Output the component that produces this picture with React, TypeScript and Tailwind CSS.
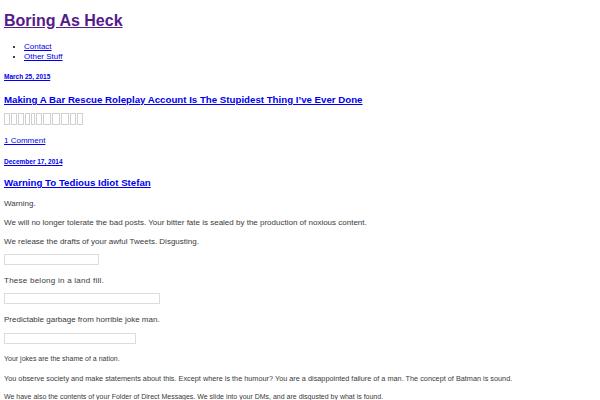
const posts = {
  bodyFont: "font-['Liberation_Sans',Arial,sans-serif]",
};

// widths of the missing-glyph boxes in the first post's excerpt
const boxes = [6, 6, 6, 5, 4, 6, 8, 8, 8, 6, 6];

function Field({ width }: { width: string }) {
  return <div className={`h-[11px] border border-[#dcdcdc] bg-white ${width}`} />;
}

export default function App() {
  return (
    <div className={`min-h-screen bg-white px-1 ${posts.bodyFont} text-[#3a3a3a]`}>
      <div className="flex flex-col">
        <h1 className="mt-[10px] text-[16px] font-bold leading-[21px]">
          <a href="#" className="text-[#551a8b] underline">Boring As Heck</a>
        </h1>

        <ul className="mt-[11px] list-disc pl-5 text-[8px] leading-[10px] text-black">
          <li><a href="#" className="text-[#0000ee] underline">Contact</a></li>
          <li><a href="#" className="text-[#0000ee] underline">Other Stuff</a></li>
        </ul>

        <div className="mt-[11px] text-[6.5px] font-bold leading-[8px]">
          <a href="#" className="text-[#0000ee] underline">March 25, 2015</a>
        </div>
        <h2 className="mt-[13px] text-[9.7px] font-bold leading-[12px]">
          <a href="#" className="text-[#0000ee] underline">
            Making A Bar Rescue Roleplay Account Is The Stupidest Thing I&rsquo;ve Ever Done
          </a>
        </h2>
        <div className="mt-[7px] flex h-[12px] gap-px">
          {boxes.map((w, i) => (
            <span key={i} className="h-full border border-[#d0d0d0]" style={{ width: w }} />
          ))}
        </div>
        <div className="mt-[11px] text-[8px] leading-[10px]">
          <a href="#" className="text-[#0000ee] underline">1 Comment</a>
        </div>

        <div className="mt-[12px] text-[6.5px] font-bold leading-[8px]">
          <a href="#" className="text-[#0000ee] underline">December 17, 2014</a>
        </div>
        <h2 className="mt-[11px] text-[9.7px] font-bold leading-[12px]">
          <a href="#" className="text-[#0000ee] underline">Warning To Tedious Idiot Stefan</a>
        </h2>

        <div className="text-[8px] leading-[11px]">
          <p className="mt-[9px]">Warning.</p>
          <p className="mt-[8px]">
            We will no longer tolerate the bad posts. Your bitter fate is sealed by the production of noxious content.
          </p>
          <p className="mt-[8px]">We release the drafts of your awful Tweets. Disgusting.</p>
          <div className="mt-[7px]"><Field width="w-[95px]" /></div>
          <p className="mt-[10px] tracking-[0.25px]">These belong in a land fill.</p>
          <div className="mt-[7px]"><Field width="w-[156px]" /></div>
          <p className="mt-[10px]">Predictable garbage from horrible joke man.</p>
          <div className="mt-[8px]"><Field width="w-[132px]" /></div>
          <div className="text-[7px]">
            <p className="mt-[9px]">Your jokes are the shame of a nation.</p>
            <p className="mt-[9px] text-[7.3px]">
              You observe society and make statements about this. Except where is the humour? You are a disappointed failure of a man. The concept of Batman is sound.
            </p>
            <p className="mt-[7px]">
              We have also the contents of your Folder of Direct Messages. We slide into your DMs, and are disgusted by what is found.
            </p>
          </div>
        </div>
      </div>
    </div>
  );
}
